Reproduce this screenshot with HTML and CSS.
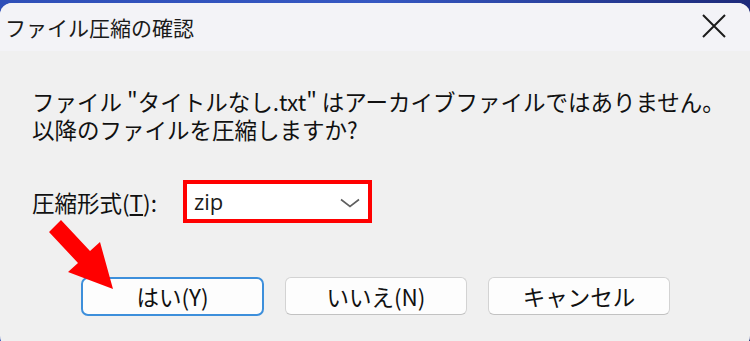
FILE: index.html
```html
<!DOCTYPE html>
<html lang="ja">
<head>
<meta charset="utf-8">
<link rel="stylesheet" href="styles.css">
</head>
<body>
<div class="window">
  <div class="titlebar">
    <span class="title">ファイル圧縮の確認</span>
    <svg class="close" width="24" height="24" viewBox="0 0 24 24"><path d="M1 1 L23 23 M23 1 L1 23" stroke="#1b1b1b" stroke-width="2" fill="none"/></svg>
  </div>
  <div class="content">
    <p class="message">ファイル "タイトルなし.txt" はアーカイブファイルではありません。<br>以降のファイルを圧縮しますか?</p>
    <div class="form-row">
      <span class="label">圧縮形式(<u>T</u>):</span>
      <div class="select">
        <span class="value">zip</span>
        <svg class="chev" width="20" height="10" viewBox="0 0 20 10"><path d="M1 1.5 L10 8.5 L19 1.5" stroke="#5f5f5f" stroke-width="1.6" fill="none"/></svg>
      </div>
    </div>
    <div class="buttons">
      <button class="btn default">はい(Y)</button>
      <button class="btn">いいえ(N)</button>
      <button class="btn">キャンセル</button>
    </div>
  </div>
  <svg class="arrow" width="130" height="80" viewBox="0 0 130 80"><polygon points="61,0 49,12 78,43 68,52 113,69 100,22 90,31" fill="#ff0000"/></svg>
</div>
</body>
</html>
```

FILE: styles.css
```css
html, body {
  margin: 0;
  padding: 0;
  width: 750px;
  height: 341px;
  overflow: hidden;
  background: linear-gradient(90deg, #2f4fb8 0%, #3557c2 50%, #1d2a7a 100%);
}
.window {
  position: relative;
  margin-top: 3px;
  height: 345px;
  background: #f0f0f0;
  border-radius: 12px;
  overflow: hidden;
  font-family: "Noto Sans CJK JP", "Noto Sans", sans-serif;
  color: #111;
}
.titlebar {
  height: 48px;
  background: #f3f3f7;
  display: flex;
  align-items: center;
  justify-content: space-between;
  padding: 0 24px 0 5px;
}
.title {
  font-size: 21px;
  color: #1a1a1a;
  margin-top: -1px;
}
.close {
  margin-top: -2px;
}
.content {
  padding: 36px 0 0 32px;
}
.message {
  margin: 0;
  font-size: 22.5px;
  line-height: 28px;
  white-space: nowrap;
}
.form-row {
  display: flex;
  align-items: center;
  margin-top: 37px;
  height: 43px;
}
.label {
  font-size: 22.5px;
  width: 151px;
}
.label u {
  text-decoration: underline;
  text-underline-offset: 2px;
}
.select {
  box-sizing: border-box;
  width: 189px;
  height: 43px;
  border: 4px solid #ff0000;
  background: #ffffff;
  display: flex;
  align-items: center;
  justify-content: space-between;
  padding: 0 8px 0 7px;
}
.value {
  font-family: "Open Sans", "Noto Sans", sans-serif;
  font-size: 22px;
  color: #1a1a1a;
  margin-top: -2px;
}
.chev {
  margin-top: 2px;
}
.buttons {
  display: flex;
  margin-top: 54px;
  padding-left: 49px;
  gap: 21px;
}
.btn {
  box-sizing: border-box;
  width: 182px;
  height: 38px;
  background: #fdfdfd;
  border: 1px solid #d3d3d3;
  border-bottom-color: #c2c2c2;
  border-radius: 6px;
  font-family: "Noto Sans CJK JP", sans-serif;
  font-size: 22.5px;
  color: #111;
  padding: 0;
  line-height: 1;
}
.btn.default {
  border: 2px solid #3d8fdb;
  border-radius: 7px;
  height: 39px;
  width: 183px;
}
.arrow {
  position: absolute;
  left: 0;
  top: 217px;
}
```
